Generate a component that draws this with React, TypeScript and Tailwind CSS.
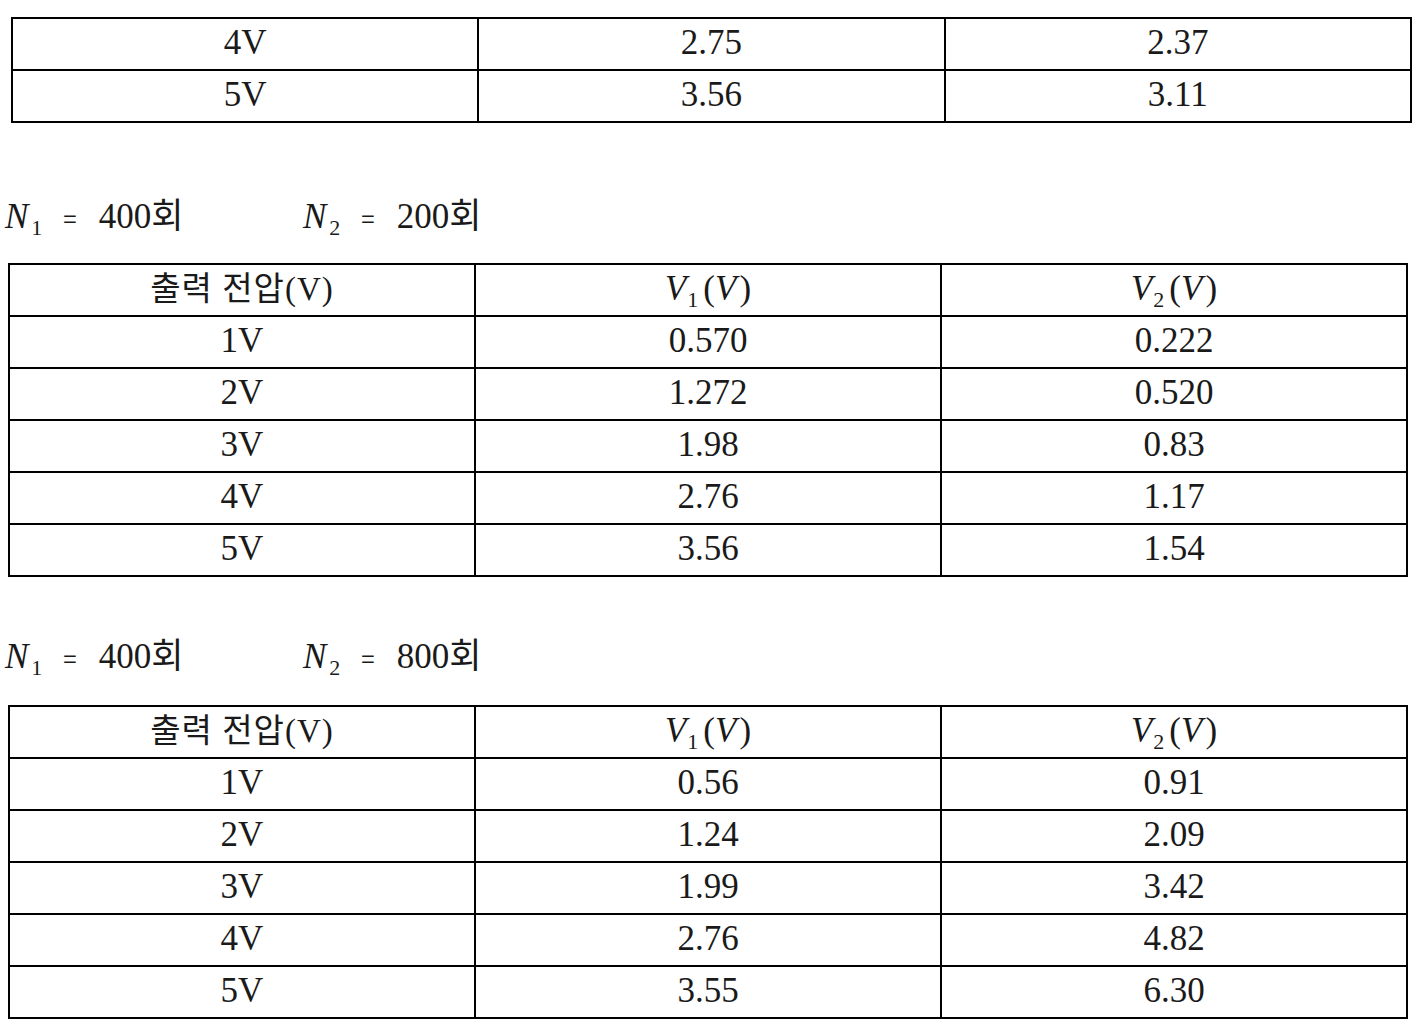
import React from 'react';

const serif = "font-['Liberation_Serif','Noto_Sans_CJK_KR',serif]";

type Row = [string, string, string];

const topRows: Row[] = [
  ['4V', '2.75', '2.37'],
  ['5V', '3.56', '3.11'],
];

const rows200: Row[] = [
  ['1V', '0.570', '0.222'],
  ['2V', '1.272', '0.520'],
  ['3V', '1.98', '0.83'],
  ['4V', '2.76', '1.17'],
  ['5V', '3.56', '1.54'],
];

const rows800: Row[] = [
  ['1V', '0.56', '0.91'],
  ['2V', '1.24', '2.09'],
  ['3V', '1.99', '3.42'],
  ['4V', '2.76', '4.82'],
  ['5V', '3.55', '6.30'],
];

const VHead = ({ n }: { n: string }) => (
  <span className="inline-flex items-baseline">
    <span className="italic">V</span>
    <span className="text-[22px] ml-[1px] relative top-[7px]">{n}</span>
    <span className="ml-[5px]">(</span>
    <span className="italic">V</span>
    <span className="ml-[3px]">)</span>
  </span>
);

const Cell = ({ children }: { children: React.ReactNode }) => (
  <td className="border-2 border-black h-[52px] p-0 text-center align-middle leading-none">
    <div className="-mt-[3px]">{children}</div>
  </td>
);

const DataTable = ({ rows, header, className }: { rows: Row[]; header?: boolean; className: string }) => (
  <table className={`border-collapse table-fixed text-[35px] text-[#1a1a1a] ${serif} ${className}`}>
    <tbody>
      {header && (
        <tr>
          <Cell>
            <span className="text-[33px] tracking-[1px]">출력 전압(V)</span>
          </Cell>
          <Cell>
            <VHead n="1" />
          </Cell>
          <Cell>
            <VHead n="2" />
          </Cell>
        </tr>
      )}
      {rows.map((r) => (
        <tr key={r[0]}>
          {r.map((c, i) => (
            <Cell key={i}>{c}</Cell>
          ))}
        </tr>
      ))}
    </tbody>
  </table>
);

const Sym = ({ n }: { n: string }) => (
  <span className="flex items-baseline">
    <span className="italic">N</span>
    <span className="text-[22px] relative top-[7px] ml-[3px]">{n}</span>
  </span>
);

const Turns = ({ n2 }: { n2: string }) => (
  <div className={`flex items-baseline h-[35px] leading-none text-[35px] text-[#1a1a1a] ${serif} pl-[5px]`}>
    <div className="flex items-baseline w-[298px]">
      <Sym n="1" />
      <span className="font-['Noto_Sans_CJK_KR',sans-serif] text-[24px] ml-[21px]">=</span>
      <span className="ml-[22px]">400회</span>
    </div>
    <div className="flex items-baseline">
      <Sym n="2" />
      <span className="font-['Noto_Sans_CJK_KR',sans-serif] text-[24px] ml-[21px]">=</span>
      <span className="ml-[22px]">{n2}회</span>
    </div>
  </div>
);

export default function App() {
  return (
    <div className="w-[1420px] h-[1030px] bg-white overflow-hidden">
      <div className="pt-[17px] pl-[11px]">
        <DataTable rows={topRows} className="w-[1401px]" />
      </div>
      <div className="mt-[76px]">
        <Turns n2="200" />
      </div>
      <div className="mt-[29px] pl-[8px]">
        <DataTable rows={rows200} header className="w-[1400px]" />
      </div>
      <div className="mt-[62px]">
        <Turns n2="800" />
      </div>
      <div className="mt-[31px] pl-[8px]">
        <DataTable rows={rows800} header className="w-[1400px]" />
      </div>
    </div>
  );
}
